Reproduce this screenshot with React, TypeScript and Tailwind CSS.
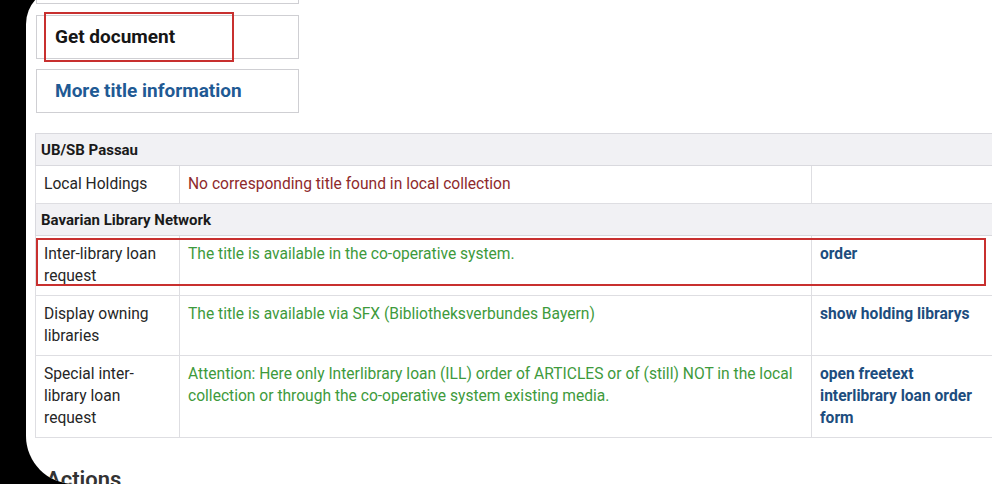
import React from 'react';

type Row =
  | { kind: 'group'; label: string }
  | { kind: 'item'; label: string; status: string; tone: 'red' | 'green'; action?: string };

const rows: Row[] = [
  { kind: 'group', label: 'UB/SB Passau' },
  { kind: 'item', label: 'Local Holdings', status: 'No corresponding title found in local collection', tone: 'red' },
  { kind: 'group', label: 'Bavarian Library Network' },
  {
    kind: 'item',
    label: 'Inter-library loan request',
    status: 'The title is available in the co-operative system.',
    tone: 'green',
    action: 'order',
  },
  {
    kind: 'item',
    label: 'Display owning libraries',
    status: 'The title is available via SFX (Bibliotheksverbundes Bayern)',
    tone: 'green',
    action: 'show holding librarys',
  },
  {
    kind: 'item',
    label: 'Special inter-library loan request',
    status:
      'Attention: Here only Interlibrary loan (ILL) order of ARTICLES or of (still) NOT in the local collection or through the co-operative system existing media.',
    tone: 'green',
    action: 'open freetext interlibrary loan order form',
  },
];

export default function App() {
  return (
    <div className="w-[992px] h-[484px] bg-black overflow-hidden">
      <div className="relative ml-[26px] -mt-[12px] h-[496px] bg-white rounded-tl-[36px] rounded-bl-[48px] overflow-hidden font-['Roboto',sans-serif]">
        {/* buttons */}
        <div className="pl-[10px]">
          <div className="w-[263px] h-[16px] border-x border-b border-[#cfcfd3]" />
          <div className="relative mt-[11px] w-[263px] h-[44px] border border-[#cfcfd3] flex items-center pl-[18px]">
            <span className="text-[19px] leading-[24px] font-bold text-[#161616]">Get document</span>
            <div className="absolute left-[7px] top-[-4px] w-[190px] h-[50px] border-2 border-[#c8302f]" />
          </div>
          <div className="mt-[10px] w-[263px] h-[44px] border border-[#cfcfd3] flex items-center pl-[18px]">
            <span className="text-[19px] leading-[24px] font-bold text-[#1f5a94]">More title information</span>
          </div>
        </div>

        {/* holdings table */}
        <div className="relative mt-[20px] ml-[9px]">
          <table className="w-[960px] table-fixed border-collapse text-[15.6px] leading-[22px]">
            <colgroup>
              <col className="w-[144px]" />
              <col className="w-[632px]" />
              <col className="w-[184px]" />
            </colgroup>
            <tbody>
              {rows.map((row, i) =>
                row.kind === 'group' ? (
                  <tr key={i} className="h-[32px] bg-[#f1f1f4]">
                    <td colSpan={3} className="border border-[#d9d9de] px-[5px] text-[15px] font-bold text-[#1a1a1a]">
                      {row.label}
                    </td>
                  </tr>
                ) : (
                  <tr key={i}>
                    <td className="align-top border border-[#dedee2] pl-[8px] pr-[6px] pt-[7px] pb-[8px] text-[#262626]">
                      {row.label}
                    </td>
                    <td
                      className={
                        'align-top border border-[#dedee2] pl-[8px] pr-[6px] pt-[7px] pb-[8px] ' +
                        (row.tone === 'red' ? 'text-[#8e2a2c]' : 'text-[#3e9a3c]')
                      }
                    >
                      {row.status}
                    </td>
                    <td className="align-top border border-[#dedee2] pl-[8px] pr-[22px] pt-[7px] pb-[8px] font-bold text-[#1d4d7e]">
                      {row.action}
                    </td>
                  </tr>
                )
              )}
            </tbody>
          </table>
          <div className="absolute left-[1px] top-[105px] w-[950px] h-[48px] border-2 border-[#c8302f]" />
        </div>

        <h2 className="mt-[28px] pl-[20px] text-[22px] leading-[28px] font-semibold text-[#333]">Actions</h2>
      </div>
    </div>
  );
}
